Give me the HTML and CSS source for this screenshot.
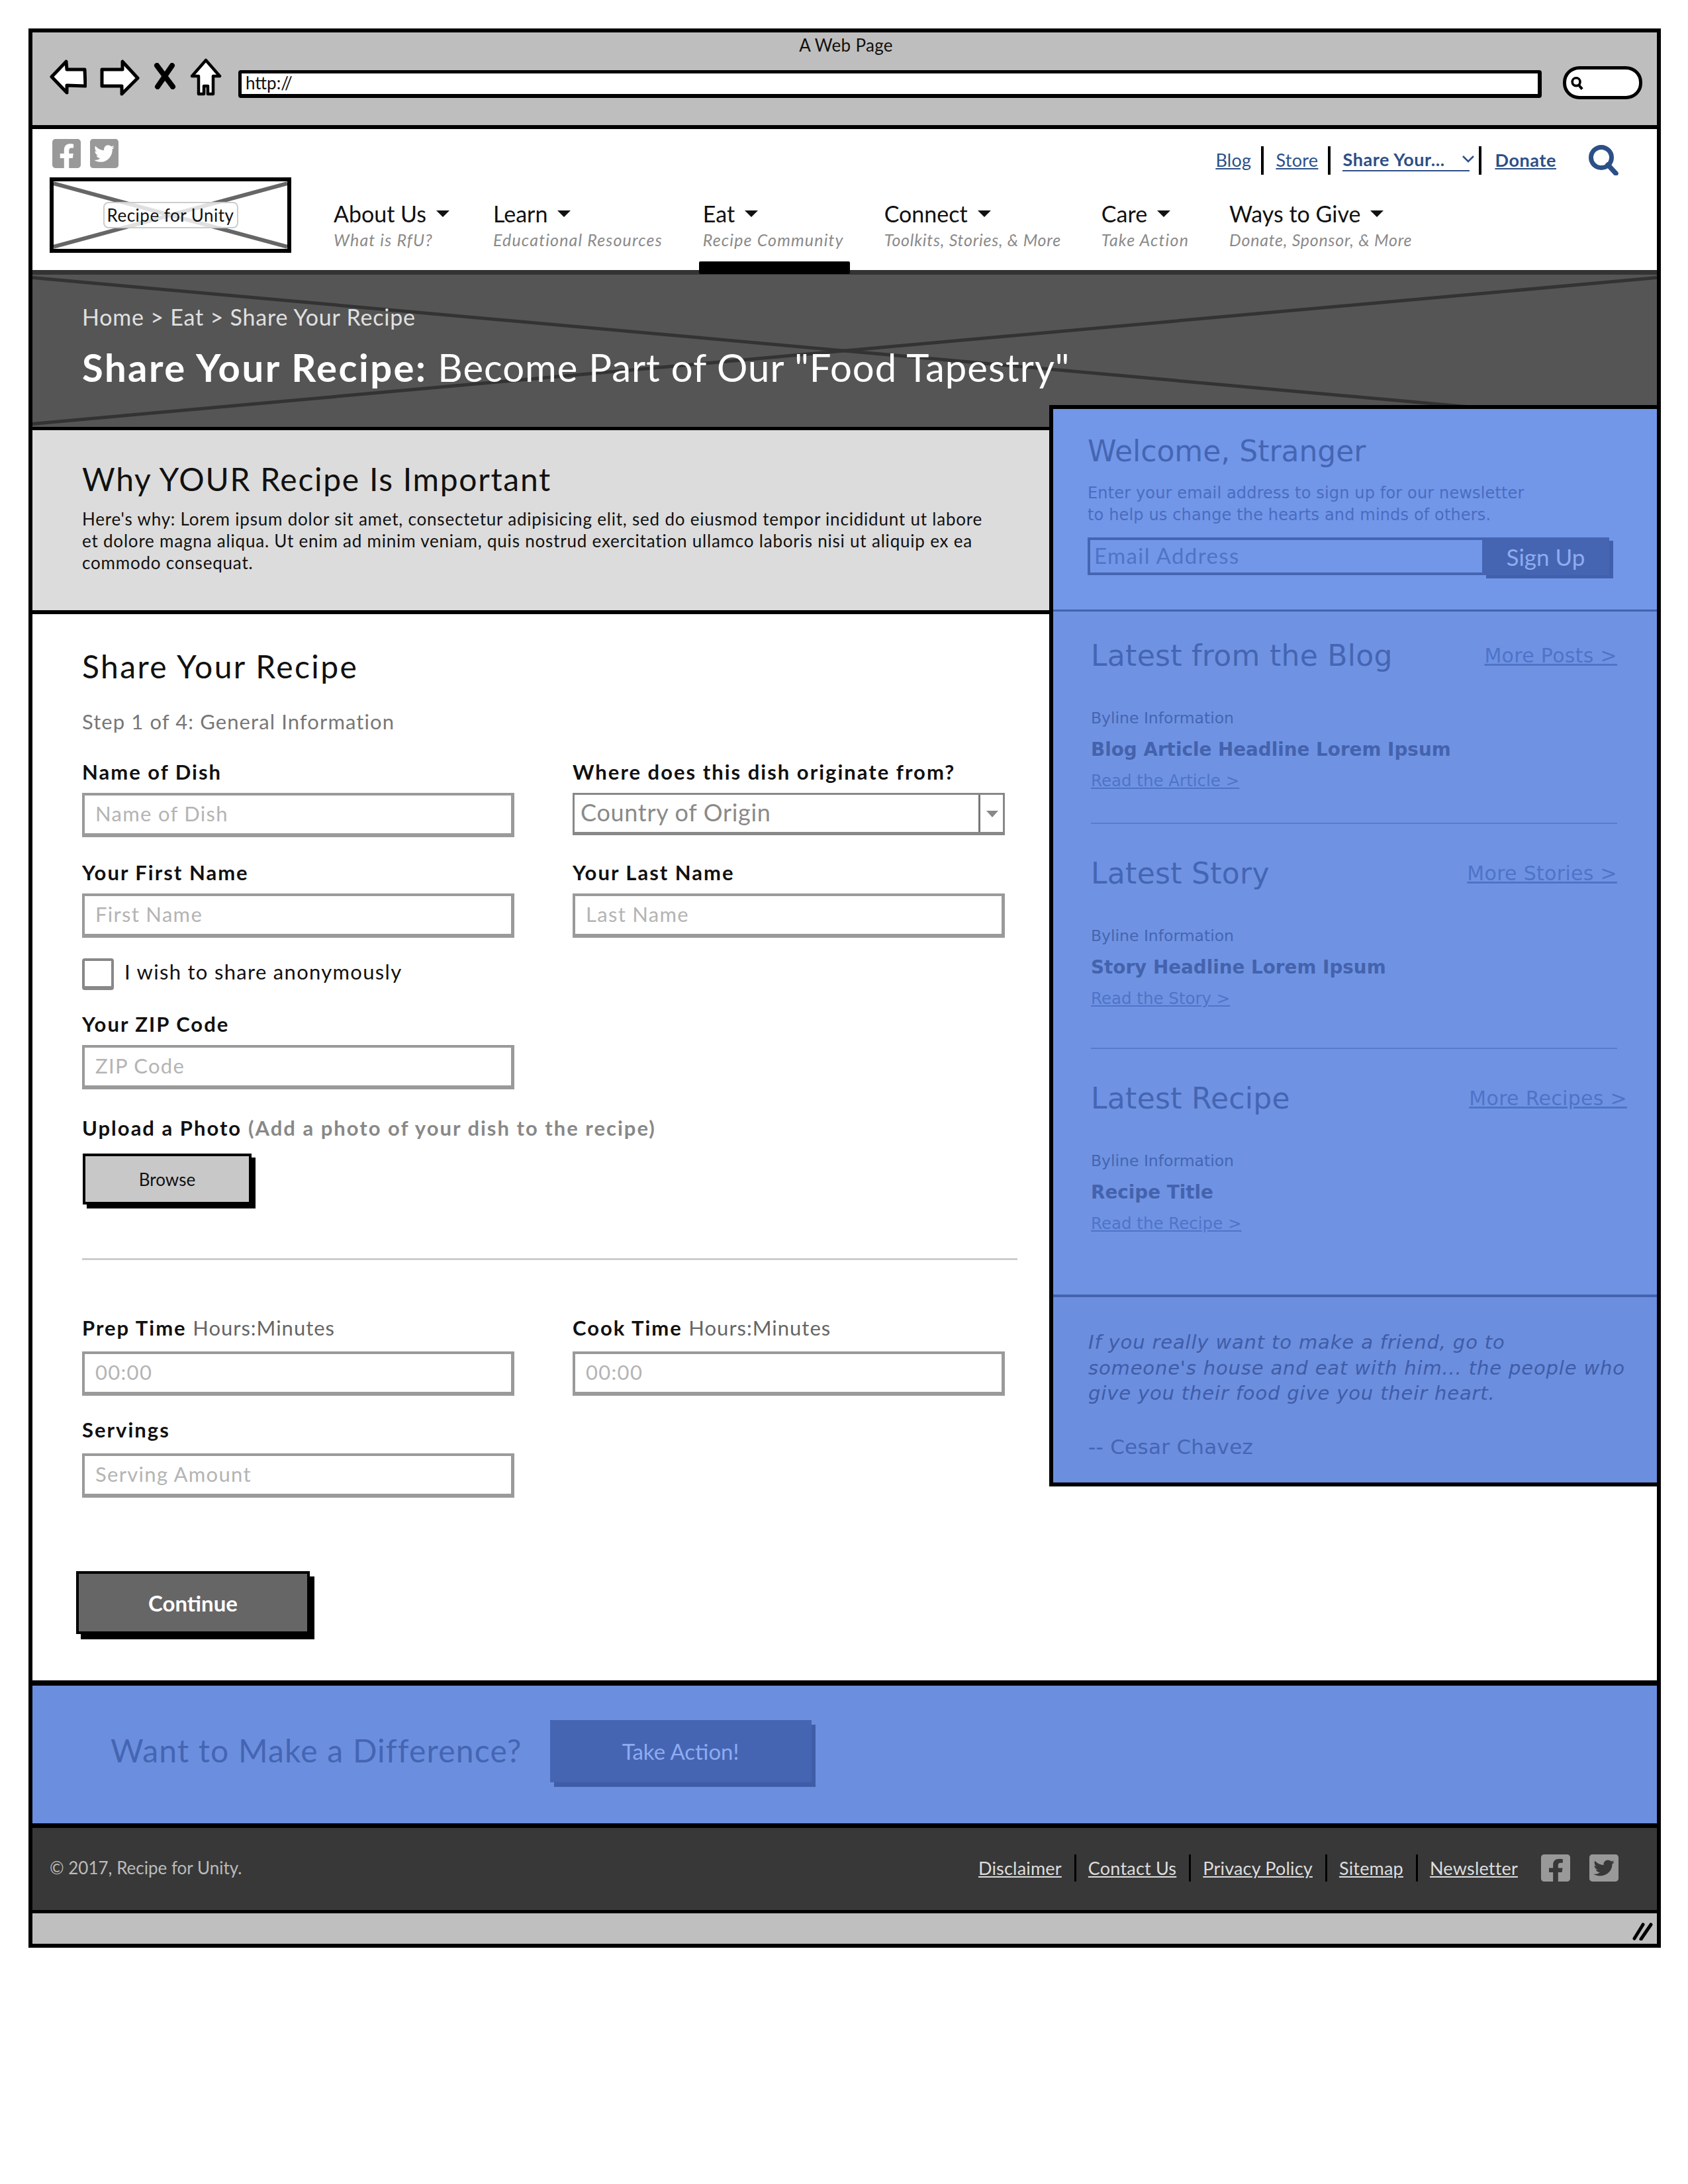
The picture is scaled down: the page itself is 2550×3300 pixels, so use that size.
FILE: index.html
```html
<!DOCTYPE html>
<html lang="en">
<head>
<meta charset="utf-8">
<title>A Web Page</title>
<link rel="stylesheet" href="styles.css">
</head>
<body>
<svg class="defs" width="0" height="0" aria-hidden="true">
  <symbol id="fb" viewBox="0 32 448 448" preserveAspectRatio="none"><path d="M400 32H48A48 48 0 0 0 0 80v352a48 48 0 0 0 48 48h137.25V327.69h-63V256h63v-54.64c0-62.15 37-96.48 93.67-96.48 27.14 0 55.52 4.84 55.52 4.84v61h-31.27c-30.81 0-40.42 19.12-40.42 38.73V256h68.78l-11 71.69h-57.78V480H400a48 48 0 0 0 48-48V80a48 48 0 0 0-48-48z"/></symbol>
  <symbol id="tw" viewBox="0 32 448 448" preserveAspectRatio="none"><path d="M400 32H48C21.5 32 0 53.5 0 80v352c0 26.5 21.5 48 48 48h352c26.5 0 48-21.5 48-48V80c0-26.5-21.5-48-48-48zm-48.9 158.8c.2 2.8.2 5.7.2 8.5 0 86.7-66 186.6-186.6 186.6-37.2 0-71.7-10.8-100.7-29.4 5.3.6 10.4.8 15.8.8 30.7 0 58.9-10.4 81.4-28-28.8-.6-53-19.5-61.3-45.5 10.1 1.5 19.2 1.5 29.6-1.2-30-6.1-52.5-32.5-52.5-64.4v-.8c8.7 4.9 18.9 7.9 29.6 8.3a65.447 65.447 0 0 1-29.2-54.6c0-12.2 3.2-23.4 8.9-33.1 32.3 39.8 80.8 65.8 135.2 68.6-9.3-44.5 24-80.6 64-80.6 18.9 0 35.9 7.9 47.9 20.7 14.8-2.8 29-8.3 41.6-15.8-4.9 15.2-15.1 28-28.6 36 13.1-1.4 25.8-5 37.4-10.2-8.8 12.9-19.9 24.4-32.4 33.7z"/></symbol>
</svg>

<div class="window">
  <div class="toolbar">
    <div class="toolbar-title">A Web Page</div>
    <div class="toolbar-row">
      <svg class="tb-back" viewBox="0 0 56 53"><path d="M3 26 L25 3 L26 15 L53 15 L54 40 L26 39 L26 50 Z" fill="#fff" stroke="#000" stroke-width="5" stroke-linejoin="round"/></svg>
      <svg class="tb-fwd" viewBox="0 0 60 55"><path d="M57 28 L34 3 L34 15 L3 15 L3 40 L33 40 L33 52 Z" fill="#fff" stroke="#000" stroke-width="5" stroke-linejoin="round"/></svg>
      <svg class="tb-stop" viewBox="0 0 36 40"><path d="M6 4 L30 36 M29 4 L7 36" fill="none" stroke="#000" stroke-width="8" stroke-linecap="round"/></svg>
      <svg class="tb-home" viewBox="0 0 48 57"><path d="M24 3 L45 27 L35 27 L35 54 L27 54 L27 42 L21 42 L21 54 L13 54 L13 27 L3 27 Z" fill="#fff" stroke="#000" stroke-width="4.5" stroke-linejoin="round"/></svg>
      <div class="tb-url">http://</div>
      <div class="tb-search"><svg class="tb-mag" viewBox="0 0 22 24"><circle cx="10" cy="10" r="6.5" fill="none" stroke="#000" stroke-width="4"/><path d="M14 15 L20 22" stroke="#000" stroke-width="4.5"/></svg></div>
    </div>
  </div>

  <header class="site-header">
    <div class="brand">
      <div class="social">
        <svg class="social-icon"><use href="#fb"/></svg>
        <svg class="social-icon"><use href="#tw"/></svg>
      </div>
      <div class="logo">
        <svg class="logo-x" viewBox="0 0 100 100" preserveAspectRatio="none"><path d="M0 3 L100 97 M100 3 L0 97" stroke="#666" stroke-width="6" vector-effect="non-scaling-stroke"/></svg>
        <span class="logo-label">Recipe for Unity</span>
      </div>
    </div>
    <div class="header-main">
      <div class="top-links">
        <a class="top-link" href="#">Blog</a>
        <a class="top-link" href="#">Store</a>
        <a class="top-link top-link--menu" href="#">Share Your...<svg class="chev" viewBox="0 0 20 12"><path d="M2 2 L10 10 L18 2" fill="none" stroke="#2d4f87" stroke-width="2.5"/></svg></a>
        <a class="top-link top-link--bold" href="#">Donate</a>
        <svg class="top-search" viewBox="0 0 46 47"><circle cx="20" cy="20" r="15.5" fill="none" stroke="#2d4f87" stroke-width="7"/><path d="M30 31 L42 44" stroke="#2d4f87" stroke-width="7.5" stroke-linecap="round"/></svg>
      </div>
      <nav class="nav">
        <div class="nav-item nav-item--first"><div class="nav-label">About Us</div><div class="nav-sub">What is RfU?</div></div>
        <div class="nav-item"><div class="nav-label">Learn</div><div class="nav-sub">Educational Resources</div></div>
        <div class="nav-item nav-item--active"><div class="nav-label">Eat</div><div class="nav-sub">Recipe Community</div></div>
        <div class="nav-item"><div class="nav-label">Connect</div><div class="nav-sub nav-sub--tight">Toolkits, Stories, &amp; More</div></div>
        <div class="nav-item"><div class="nav-label">Care</div><div class="nav-sub">Take Action</div></div>
        <div class="nav-item"><div class="nav-label">Ways to Give</div><div class="nav-sub nav-sub--tight">Donate, Sponsor, &amp; More</div></div>
      </nav>
    </div>
  </header>

  <section class="hero">
    <svg class="hero-x" viewBox="0 0 100 100" preserveAspectRatio="none"><path d="M0 2 L100 98 M100 2 L0 98" stroke="#333" stroke-width="5" vector-effect="non-scaling-stroke"/></svg>
    <div class="breadcrumb">Home &gt; Eat &gt; Share Your Recipe</div>
    <h1 class="hero-title"><strong>Share Your Recipe:</strong> Become Part of Our "Food Tapestry"</h1>
  </section>

  <section class="intro">
    <h2 class="intro-title">Why YOUR Recipe Is Important</h2>
    <p class="intro-text">Here's why: Lorem ipsum dolor sit amet, consectetur adipisicing elit, sed do eiusmod tempor incididunt ut labore<br>et dolore magna aliqua. Ut enim ad minim veniam, quis nostrud exercitation ullamco laboris nisi ut aliquip ex ea<br>commodo consequat.</p>
  </section>

  <section class="form-area">
    <h2 class="form-title">Share Your Recipe</h2>
    <div class="step">Step 1 of 4: General Information</div>

    <div class="form-grid">
      <div class="field"><label class="field-label">Name of Dish</label><input class="input" placeholder="Name of Dish"></div>
      <div class="field"><label class="field-label">Where does this dish originate from?</label>
        <div class="select"><span class="select-text">Country of Origin</span><span class="select-btn"></span></div></div>
      <div class="field"><label class="field-label">Your First Name</label><input class="input" placeholder="First Name"></div>
      <div class="field"><label class="field-label">Your Last Name</label><input class="input" placeholder="Last Name"></div>
    </div>

    <label class="check"><input class="check-box" type="checkbox"><span>I wish to share anonymously</span></label>

    <div class="field field--half field--zip"><label class="field-label">Your ZIP Code</label><input class="input" placeholder="ZIP Code"></div>

    <div class="upload-label"><strong>Upload a Photo</strong> <span class="muted">(Add a photo of your dish to the recipe)</span></div>
    <button class="browse" type="button">Browse</button>

    <hr class="form-rule">

    <div class="form-grid form-grid--time">
      <div class="field"><label class="field-label"><strong>Prep Time</strong> <span class="hint">Hours:Minutes</span></label><input class="input" placeholder="00:00"></div>
      <div class="field"><label class="field-label"><strong>Cook Time</strong> <span class="hint">Hours:Minutes</span></label><input class="input" placeholder="00:00"></div>
      <div class="field"><label class="field-label">Servings</label><input class="input" placeholder="Serving Amount"></div>
    </div>

    <button class="continue" type="button">Continue</button>
  </section>

  <section class="cta">
    <div class="cta-text">Want to Make a Difference?</div>
    <button class="cta-btn" type="button">Take Action!</button>
  </section>

  <footer class="site-footer">
    <div class="copyright">© 2017, Recipe for Unity.</div>
    <div class="footer-links">
      <a class="footer-link" href="#">Disclaimer</a>
      <a class="footer-link" href="#">Contact Us</a>
      <a class="footer-link" href="#">Privacy Policy</a>
      <a class="footer-link" href="#">Sitemap</a>
      <a class="footer-link footer-link--last" href="#">Newsletter</a>
      <svg class="footer-icon"><use href="#fb"/></svg>
      <svg class="footer-icon"><use href="#tw"/></svg>
    </div>
  </footer>

  <div class="statusbar"><svg class="grip" viewBox="0 0 33 27"><path d="M17 3 L4 24 M29 3 L14 25" stroke="#000" stroke-width="5" stroke-linecap="round"/></svg></div>

  <aside class="sidebar">
    <div class="side-welcome">
      <h3 class="welcome-title">Welcome, Stranger</h3>
      <p class="welcome-text">Enter your email address to sign up for our newsletter<br>to help us change the hearts and minds of others.</p>
      <div class="signup">
        <input class="signup-input" placeholder="Email Address">
        <button class="signup-btn" type="button">Sign Up</button>
      </div>
    </div>
    <div class="side-feed">
      <article class="feed-block feed-block--first">
        <div class="feed-head"><h3 class="feed-title">Latest from the Blog</h3><a class="feed-more" href="#">More Posts &gt;</a></div>
        <div class="feed-byline">Byline Information</div>
        <div class="feed-headline">Blog Article Headline Lorem Ipsum</div>
        <a class="feed-read" href="#">Read the Article &gt;</a>
      </article>
      <article class="feed-block feed-block--tall">
        <div class="feed-head"><h3 class="feed-title">Latest Story</h3><a class="feed-more" href="#">More Stories &gt;</a></div>
        <div class="feed-byline">Byline Information</div>
        <div class="feed-headline">Story Headline Lorem Ipsum</div>
        <a class="feed-read" href="#">Read the Story &gt;</a>
      </article>
      <article class="feed-block feed-block--last">
        <div class="feed-head feed-head--wide"><h3 class="feed-title">Latest Recipe</h3><a class="feed-more" href="#">More Recipes &gt;</a></div>
        <div class="feed-byline">Byline Information</div>
        <div class="feed-headline">Recipe Title</div>
        <a class="feed-read" href="#">Read the Recipe &gt;</a>
      </article>
    </div>
    <div class="side-quote">
      <p class="quote-text">If you really want to make a friend, go to<br>someone's house and eat with him... the people who<br>give you their food give you their heart.</p>
      <p class="quote-by">-- Cesar Chavez</p>
    </div>
  </aside>
</div>
</body>
</html>
```

FILE: styles.css
```css
* { box-sizing: border-box; }
html, body { margin: 0; padding: 0; background: #fff; }
body { width: 2550px; height: 3300px; font-family: "Lato", "Noto Sans", sans-serif; color: #111; }
.defs { position: absolute; }
h1, h2, h3, p { margin: 0; font-weight: 400; }
a { color: inherit; }

.window { position: relative; width: 2466px; margin: 43px 0 0 43px; border: 6px solid #000; background: #fff; display: flex; flex-direction: column; }

/* browser chrome */
.toolbar { height: 146px; background: #bebebe; border-bottom: 6px solid #000; padding: 4px 22px 0 26px; }
.toolbar-title { font-size: 26px; line-height: 30px; text-align: center; color: #111; letter-spacing: .3px; }
.toolbar-row { display: flex; align-items: flex-start; gap: 20px; margin-top: 5px; }
.tb-back { width: 56px; height: 53px; margin-top: 2px; flex: none; }
.tb-fwd { width: 60px; height: 55px; margin-top: 2px; flex: none; }
.tb-stop { width: 36px; height: 40px; margin-top: 7px; flex: none; }
.tb-home { width: 48px; height: 57px; flex: none; }
.tb-url { flex: 1; height: 42px; margin: 18px 0 0 5px; background: #fff; border: 5px solid #000; border-right-width: 6px; border-bottom-width: 6px; border-radius: 4px; font-size: 26px; line-height: 28px; padding-left: 6px; color: #111; }
.tb-search { width: 120px; height: 50px; margin: 12px 0 0 12px; background: #fff; border: 5px solid #000; border-radius: 25px / 24px; padding: 9px 0 0 6px; flex: none; }
.tb-search .tb-mag { display: block; width: 20px; height: 23px; }

/* header */
.site-header { height: 220px; border-bottom: 7px solid #333; display: flex; padding: 15px 0 0 26px; }
.brand { width: 365px; flex: none; }
.social { display: flex; gap: 14px; padding-left: 4px; }
.social-icon { width: 43px; height: 44px; fill: #999; }
.logo { position: relative; height: 114px; margin-top: 14px; border: 6px solid #000; display: flex; align-items: center; justify-content: center; }
.logo-x { position: absolute; inset: 0; width: 100%; height: 100%; }
.logo-label { position: relative; background: rgba(255,255,255,.8); border: 2px solid #ccc; border-radius: 8px; font-size: 26px; line-height: 36px; padding: 0 4px; letter-spacing: .5px; color: #111; }
.header-main { flex: 1; min-width: 0; padding-left: 64px; }
.top-links { display: flex; align-items: center; justify-content: flex-end; height: 47px; margin-top: 8px; padding-right: 58px; }
.top-link { font-size: 27px; line-height: 34px; letter-spacing: .3px; color: #2d4f87; padding-right: 19px; margin-right: 18px; position: relative; }
.top-link::after { content: ""; position: absolute; right: 0; top: -4px; height: 43px; width: 4px; background: #000; }
.top-link--menu { font-weight: 700; padding-right: 0; width: 192px; display: inline-block; margin-right: 38px; letter-spacing: .6px; text-decoration: none; border-bottom: 2px solid #2d4f87; line-height: 32px; }
.top-link--menu::after { right: -18px; }
.top-link--bold { font-weight: 700; margin-right: 48px; padding-right: 0; letter-spacing: .6px; }
.top-link--bold::after { display: none; }
.chev { position: absolute; right: -8px; top: 9px; width: 20px; height: 12px; }
.top-search { width: 46px; height: 47px; flex: none; }
.nav { display: flex; gap: 61px; margin-top: 38px; }
.nav-item { position: relative; }
.nav-item--first { margin-right: 5px; }
.nav-label { font-size: 34px; line-height: 40px; display: flex; align-items: center; gap: 15px; color: #111; }
.nav-label::after { content: ""; width: 0; height: 0; border-left: 10px solid transparent; border-right: 10px solid transparent; border-top: 10px solid #111; }
.nav-sub { font-size: 25px; line-height: 30px; margin-top: 4px; font-style: italic; color: #8a8a8a; white-space: nowrap; letter-spacing: 1.15px; }
.nav-sub--tight { letter-spacing: .75px; }
.nav-item--active::after { content: ""; position: absolute; left: -6px; right: -9px; top: 92px; height: 19px; background: #000; border-radius: 2px; }

/* hero */
.hero { position: relative; height: 235px; background: #555; border-bottom: 5px solid #000; padding: 44px 0 0 75px; color: #fff; }
.hero-x { position: absolute; inset: 0; width: 100%; height: 100%; }
.breadcrumb { position: relative; font-size: 34px; line-height: 40px; letter-spacing: .8px; color: #e0e0e0; }
.hero-title { position: relative; font-size: 58px; line-height: 70px; margin-top: 21px; letter-spacing: 1px; color: #fff; white-space: nowrap; }
.hero-title strong { font-weight: 700; letter-spacing: 2.5px; }

/* intro */
.intro { height: 278px; background: #dcdcdc; border-bottom: 6px solid #000; padding: 46px 0 0 75px; }
.intro-title { font-size: 48px; line-height: 56px; letter-spacing: 1.7px; color: #111; }
.intro-text { font-size: 26px; line-height: 33px; margin-top: 16px; letter-spacing: .8px; color: #111; white-space: nowrap; }

/* form */
.form-area { height: 1619px; border-bottom: 8px solid #000; padding: 49px 0 0 75px; }
.form-title { font-size: 48px; line-height: 60px; letter-spacing: 2.4px; color: #111; }
.step { font-size: 31px; line-height: 40px; margin-top: 33px; letter-spacing: 1.1px; color: #777; }
.form-grid { display: grid; grid-template-columns: 653px 653px; column-gap: 88px; row-gap: 37px; margin-top: 40px; }
.field-label { display: block; font-size: 31px; line-height: 32px; font-weight: 700; letter-spacing: 2px; color: #111; white-space: nowrap; }
.input { display: block; width: 100%; height: 67px; margin-top: 16px; border: 4px solid #9a9a9a; border-bottom-width: 6px; border-right-width: 5px; background: #fff; padding: 0 16px 3px; font: 31px "Lato", sans-serif; letter-spacing: 1.3px; outline: 0; }
.input::placeholder { color: #b4b4b4; opacity: 1; }
.select { display: flex; height: 64px; margin-top: 16px; border: 3px solid #888; border-bottom-width: 5px; background: #fff; }
.select-text { flex: 1; font-size: 36px; line-height: 52px; padding-left: 9px; letter-spacing: .7px; color: #8a8a8a; }
.select-btn { position: relative; width: 37px; border-left: 3px solid #777; }
.select-btn::after { content: ""; position: absolute; left: 9px; top: 24px; border-left: 9px solid transparent; border-right: 9px solid transparent; border-top: 10px solid #888; }
.check { display: flex; align-items: flex-start; gap: 16px; margin-top: 31px; font-size: 31px; line-height: 40px; letter-spacing: 1.3px; color: #111; }
.check-box { appearance: none; width: 48px; height: 48px; margin: 0; border: 4px solid #888; border-bottom-width: 6px; border-radius: 4px; background: #fff; flex: none; }
.field--half { width: 653px; }
.field--zip { margin-top: 35px; }
.upload-label { margin-top: 42px; font-size: 31px; line-height: 32px; letter-spacing: 2px; color: #111; }
.muted { color: #888; font-weight: 700; }
.browse { display: block; width: 255px; height: 77px; margin: 23px 0 0 1px; background: #c8c8c8; border: 4px solid #000; box-shadow: 6px 6px 0 #000; font: 26px "Lato", sans-serif; color: #111; padding: 0; }
.form-rule { width: 1413px; height: 3px; border: 0; margin: 81px 0 0; background: #ccc; }
.form-grid--time { margin-top: 86px; row-gap: 35px; }
.form-grid--time .input { margin-top: 20px; }
.form-grid--time .field:nth-child(3) .input { margin-top: 20px; }
.field-label strong { font-weight: 700; }
.hint { font-weight: 400; color: #666; letter-spacing: 1px; }
.continue { display: block; width: 353px; height: 95px; margin: 111px 0 0 -9px; background: #666; border: 4px solid #000; box-shadow: 7px 8px 0 #000; font: 700 33px "Lato", sans-serif; color: #fff; padding: 0; }

/* cta */
.cta { height: 215px; background: #6b8fde; border-bottom: 7px solid #000; display: flex; align-items: flex-start; padding: 52px 0 0 118px; }
.cta-text { font-size: 48px; line-height: 92px; color: #4565b3; letter-spacing: 1.2px; }
.cta-btn { width: 395px; height: 94px; margin-left: 42px; background: #4565b3; border: 0; box-shadow: 6px 7px 0 #3f5ca8; font: 33px "Lato", sans-serif; color: #8eabf0; padding: 0; }

/* footer */
.site-footer { height: 129px; background: #383838; border-bottom: 5px solid #000; display: flex; justify-content: space-between; align-items: flex-start; padding: 40px 58px 0 26px; }
.copyright { font-size: 26px; line-height: 40px; color: #bbb; }
.footer-links { display: flex; align-items: flex-start; }
.footer-link { font-size: 27px; line-height: 41px; letter-spacing: .2px; color: #ddd; padding-right: 19px; margin-right: 18px; border-right: 3px solid #000; height: 41px; }
.footer-link--last { border-right: 0; margin-right: 17px; padding-right: 18px; }
.footer-icon { width: 44px; height: 41px; fill: #999; margin-right: 29px; }
.footer-icon:last-child { margin-right: 0; }

/* status bar */
.statusbar { position: relative; height: 46px; background: #bfbfbf; }
.grip { position: absolute; right: 5px; top: 14px; width: 33px; height: 27px; }

/* sidebar overlay */
.sidebar { position: absolute; left: 1536px; right: 0; top: 563px; border: 6px solid #000; border-right: 0; color: #4565b3; display: flex; flex-direction: column; font-family: "DejaVu Sans", sans-serif; }
.side-welcome { height: 306px; background: #7297e8; padding: 36px 0 0 52px; border-bottom: 3px solid #4462ad; }
.welcome-title { font-size: 44px; line-height: 56px; color: #4565b3; }
.welcome-text { font-size: 24px; line-height: 33px; margin-top: 19px; letter-spacing: .15px; color: #4a6cc0; }
.signup { display: flex; margin-top: 17px; align-items: flex-start; }
.signup-input { width: 596px; height: 57px; border: 4px solid #4565b3; background: #7297e8; padding: 0 6px 3px; font: 33px "Lato", sans-serif; letter-spacing: 1.4px; outline: 0; border-right: 0; }
.signup-input::placeholder { color: #4f73c6; opacity: 1; }
.signup-btn { width: 192px; height: 57px; background: #4565b3; border: 0; box-shadow: 6px 5px 0 #4060ad; font: 35px "Lato", sans-serif; color: #8eabf0; padding: 0; }
.side-feed { height: 1036px; background: #6f93e2; padding: 42px 0 0 57px; border-bottom: 4px solid #4462ad; }
.feed-block { width: 795px; padding-bottom: 42px; border-bottom: 2px solid #5a7bcb; margin-bottom: 50px; }
.feed-block--first { padding-bottom: 40px; }
.feed-block--tall { padding-bottom: 51px; }
.feed-block--last { border-bottom: 0; }
.feed-head { display: flex; justify-content: space-between; align-items: center; height: 50px; margin-bottom: 46px; }
.feed-head--wide { width: 810px; }
.feed-title { font-size: 44px; line-height: 50px; letter-spacing: .3px; color: #4565b3; }
.feed-more { font-size: 30px; line-height: 40px; letter-spacing: .3px; color: #4f73c9; }
.feed-byline { font-size: 23.5px; line-height: 47px; color: #4565b3; }
.feed-headline { font-size: 27.8px; line-height: 47px; font-weight: 700; color: #4462ad; }
.feed-read { display: block; font-size: 24.5px; line-height: 47px; color: #4f73c9; width: max-content; }
.side-quote { height: 280px; background: #6b8ede; padding: 49px 0 0 53px; }
.quote-text { font-size: 29px; line-height: 38.5px; font-style: italic; letter-spacing: .85px; color: #3f5ca8; }
.quote-by { font-size: 31px; line-height: 40px; margin-top: 41px; letter-spacing: .3px; color: #4565b3; }
```
